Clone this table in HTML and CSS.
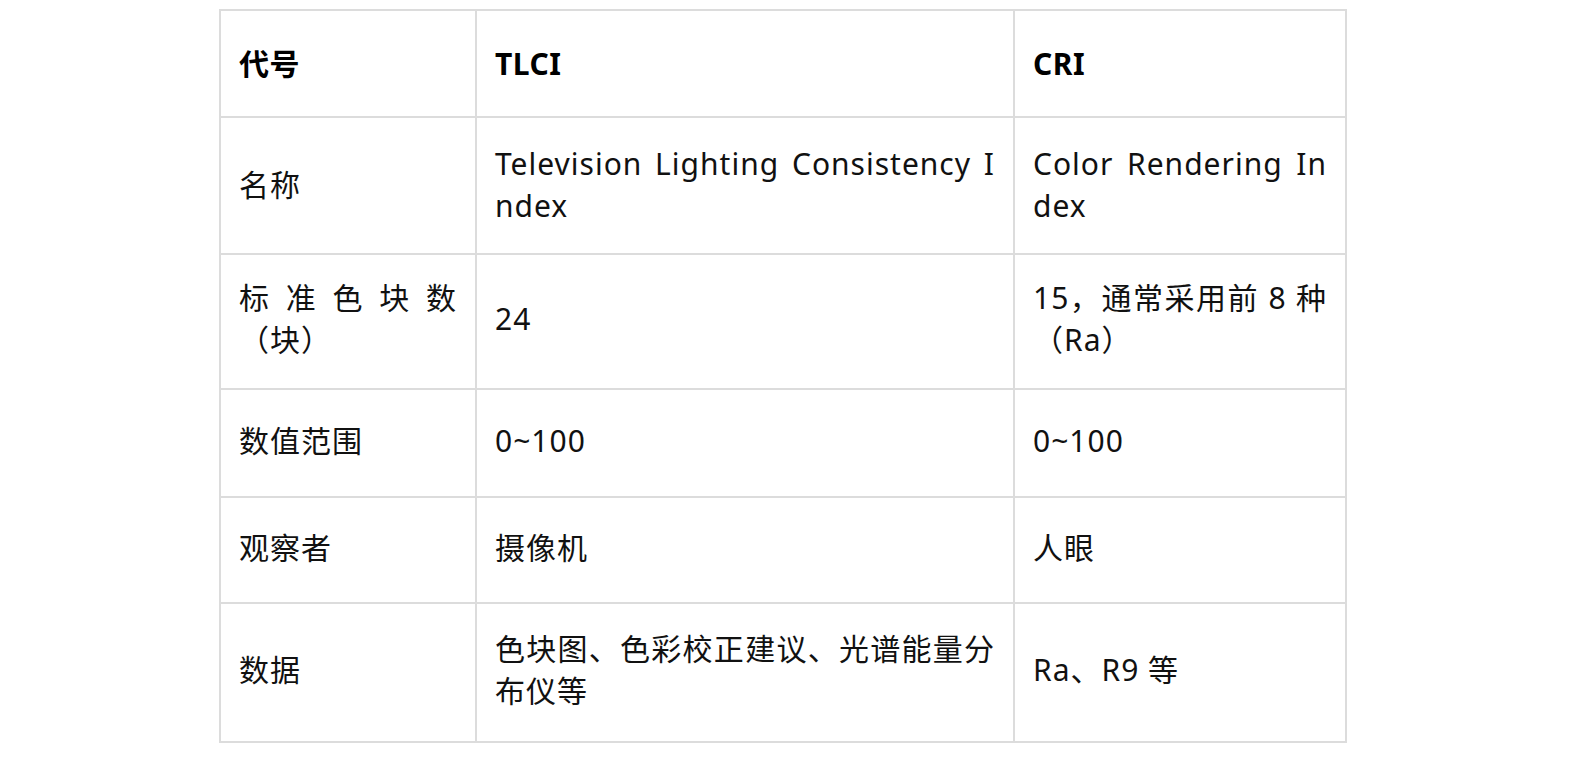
FILE: index.html
```html
<!DOCTYPE html>
<html lang="zh-CN">
<head>
<meta charset="utf-8">
<title>TLCI vs CRI</title>
<link rel="stylesheet" href="styles.css">
</head>
<body>
<div class="page">
  <table class="cmp">
    <colgroup>
      <col class="c1">
      <col class="c2">
      <col class="c3">
    </colgroup>
    <tbody>
      <tr class="r1">
        <td class="head">代号</td>
        <td class="head">TLCI</td>
        <td class="head">CRI</td>
      </tr>
      <tr class="r2">
        <td>名称</td>
        <td class="just">Television Lighting Consistency Index</td>
        <td class="just">Color Rendering Index</td>
      </tr>
      <tr class="r3">
        <td class="just">标准色块数（块）</td>
        <td>24</td>
        <td class="just">15，通常采用前 8 种（Ra）</td>
      </tr>
      <tr class="r4">
        <td>数值范围</td>
        <td>0~100</td>
        <td>0~100</td>
      </tr>
      <tr class="r5">
        <td>观察者</td>
        <td>摄像机</td>
        <td>人眼</td>
      </tr>
      <tr class="r6">
        <td>数据</td>
        <td class="just">色块图、色彩校正建议、光谱能量分布仪等</td>
        <td>Ra、R9 等</td>
      </tr>
    </tbody>
  </table>
</div>
</body>
</html>
```

FILE: styles.css
```css
html, body {
  margin: 0;
  padding: 0;
  background: #ffffff;
}

.page {
  padding: 9px 0 0 219px;
}

.cmp {
  border-collapse: collapse;
  table-layout: fixed;
  width: 1126px;
  font-family: "Noto Sans", "Noto Sans CJK SC", sans-serif;
  font-size: 30px;
  line-height: 42px;
  letter-spacing: 1px;
  color: #111111;
}

.c1 { width: 256px; }
.c2 { width: 538px; }
.c3 { width: 332px; }

.cmp td {
  border: 2px solid #dcdcdc;
  padding: 0 18px 5px;
  vertical-align: middle;
  text-align: left;
}

.cmp .r2 td {
  padding-top: 4px;
}

.cmp td.just {
  text-align: justify;
  word-break: break-all;
}

.cmp td.head {
  padding-top: 6px;
  font-weight: 700;
  letter-spacing: 0.5px;
  color: #000000;
}

.r1 { height: 107px; }
.r2 { height: 137px; }
.r3 { height: 135px; }
.r4 { height: 108px; }
.r5 { height: 106px; }
.r6 { height: 139px; }
```
